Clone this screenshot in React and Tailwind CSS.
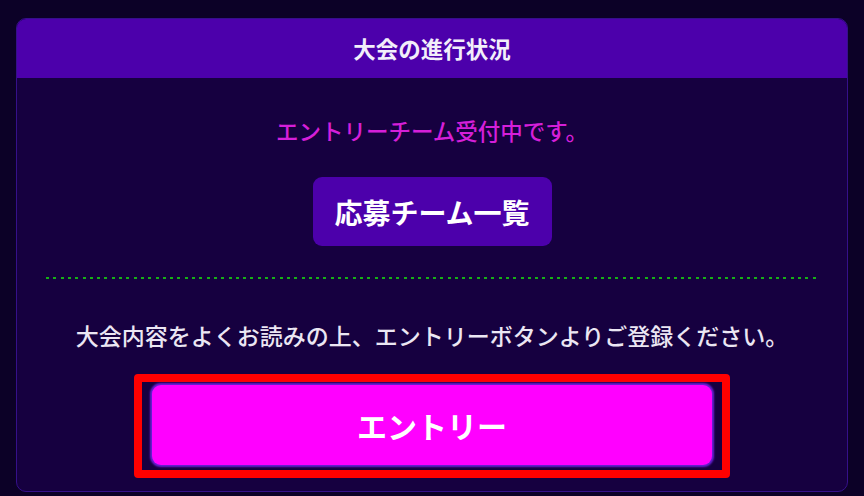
import React from 'react';

function App() {
    return (
        <div className="w-[864px] h-[496px] bg-[#0c0127] pt-[18px] px-[16px] overflow-hidden font-['Noto_Sans_CJK_JP',sans-serif]">
            <div className="h-[474px] border border-[#35108a] rounded-[10px] bg-[#160040] overflow-hidden flex flex-col items-center">
                <div className="w-full h-[59px] bg-[#4c00ab] flex items-center justify-center">
                    <h1 className="text-[22.5px] font-bold text-[#f2eefa] leading-none">大会の進行状況</h1>
                </div>

                <p className="mt-[37px] text-[22.5px] leading-[30px] font-medium text-[#d51fd9]">
                    エントリーチーム受付中です。
                </p>

                <button className="mt-[32px] w-[239px] h-[69px] rounded-[9px] bg-[#4c00ab] text-white text-[28px] font-bold flex items-center justify-center">
                    応募チーム一覧
                </button>

                <div className="mt-[31px] w-[772px] h-[2px] bg-[repeating-linear-gradient(90deg,#16b016_0_3px,transparent_3px_7.3px)]"></div>

                <p className="mt-[41px] text-[23px] leading-[30px] font-medium text-[#ebe6f3] whitespace-nowrap">
                    大会内容をよくお読みの上、エントリーボタンよりご登録ください。
                </p>

                <div className="mt-[24px] w-[596px] h-[104px] border-8 border-[#ff0000] rounded-[4px] px-[10px] pt-[3px] pb-[5px]">
                    <button className="w-full h-full rounded-[9px] bg-[#ff00ff] shadow-[0_0_2px_2px_#6a1fd6] text-white text-[30px] font-semibold flex items-center justify-center">
                        エントリー
                    </button>
                </div>
            </div>
        </div>
    );
}

export default App;
